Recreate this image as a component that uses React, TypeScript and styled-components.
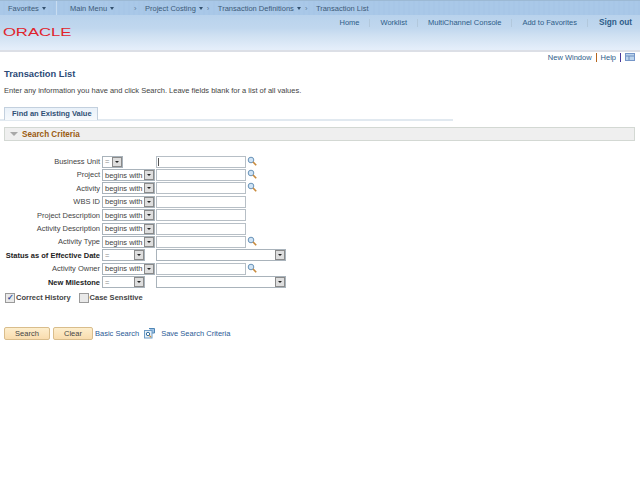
import React from "react";
import styled, { createGlobalStyle } from "styled-components";

const Global = createGlobalStyle`
  html, body { margin: 0; padding: 0; background: #fff; }
  body { font-family: "Liberation Sans", Arial, sans-serif; font-size: 7.5px; color: #444; width: 640px; height: 480px; overflow: hidden; }
`;
const Header = styled.header`height: 52px; background: linear-gradient(#b8d2ec 14px, #c0d7ee 28px, #d0e1f2 36px, #e4eefa 49px); border-bottom: 2px solid #dcdfe6; box-sizing: border-box;`;
const MenuBar = styled.nav`height: 15px; box-sizing: border-box; display: flex; align-items: center; background: repeating-linear-gradient(90deg, #a9c8e8 0 3px, #a7c6e7 3px 5px); border-top: 1px solid #9cb9d4; color: #3c5a78; white-space: nowrap;`;
const MenuItem = styled.span<{ $w: number; $pad: number; $divider?: boolean }>`width: ${p => p.$w}px; box-sizing: border-box; display: flex; align-items: center; height: 14px; padding-left: ${p => p.$pad}px; border-right: ${p => p.$divider ? "1px solid #c8dcf0" : "none"};`;
const Caret = styled.i`display: inline-block; width: 0; height: 0; margin-left: 3px; border-left: 2.5px solid transparent; border-right: 2.5px solid transparent; border-top: 3px solid #33516f;`;
const Chevron = styled.span`width: 15px; box-sizing: border-box; padding-left: 4px; color: #5d7b98;`;
const HeaderRow = styled.div`display: flex; justify-content: space-between; align-items: flex-start;`;
const Logo = styled.div`color: #e0242c; font-size: 11.5px; line-height: 12px; transform: scaleX(1.45); transform-origin: left; padding: 11px 0 0 2px;`;
const TopLinks = styled.div`display: flex; align-items: center; height: 14px; margin-top: 1px; padding-right: 8px;`;
const TopLink = styled.a<{ $strong?: boolean; $last?: boolean }>`color: #2d5c88; font-size: ${p => p.$strong ? "8.25px" : "7.5px"}; font-weight: ${p => p.$strong ? 700 : 400}; padding: 0 ${p => p.$last ? 0 : 10}px 0 ${p => p.$last ? 11 : 10}px; border-right: ${p => p.$last ? "none" : "1px solid #b2c8dc"}; line-height: 8px;`;
const Utility = styled.div`height: 10px; display: flex; justify-content: flex-end; align-items: center; padding-right: 5px; color: #2d5c88;`;
const Sep = styled.span<{ $c: string }>`width: 1px; height: 9px; margin: 0 4px; background: ${p => p.$c};`;
const Main = styled.main`display: block;`;
const Title = styled.h1`margin: 6px 0 0 4px; font-size: 9.3px; line-height: 12px; font-weight: 700; color: #2b4a78;`;
const Intro = styled.p`margin: 6px 0 0 4px; line-height: 10px; color: #444;`;
const TabRow = styled.div`margin-top: 11px; margin-right: 187px; padding-left: 4px; border-bottom: 2px solid #e1e9f0; height: 12px;`;
const Tab = styled.div`height: 13px; box-sizing: border-box; width: 94px; padding-left: 7px; border: 1px solid #c3d0de; border-bottom: none; background: linear-gradient(#e9f1f9, #f6f9fc); color: #2f4f74; font-weight: 700; line-height: 12px; white-space: nowrap;`;
const Criteria = styled.div`margin: 6px 5px 0 4px; height: 14px; box-sizing: border-box; background: #efefef; border: 1px solid #d3d8d3; display: flex; align-items: center; gap: 4px; padding-left: 5px; color: #9a5a10; font-size: 8.15px; font-weight: 700;`;
const Tri = styled.i`width: 0; height: 0; border-left: 4px solid transparent; border-right: 4px solid transparent; border-top: 4px solid #a8a8a8;`;
const Form = styled.div`margin-top: 14px; display: grid; grid-template-columns: 101px 55px auto; align-items: center;`;
const Label = styled.label<{ $strong?: boolean }>`text-align: right; padding-right: 1px; height: 13.4px; line-height: 13px; white-space: nowrap; color: ${p => p.$strong ? "#222" : "#444"}; font-weight: ${p => p.$strong ? 700 : 400};`;
const Select = styled.div<{ $w: number; $muted?: boolean }>`width: ${p => p.$w}px; height: 12px; box-sizing: border-box; border: 1px solid #a9b3bb; background: #fff; display: flex; justify-content: space-between; align-items: center; padding-left: 2px; white-space: nowrap; color: ${p => p.$muted ? "#888" : "#444"};`;
const Arrow = styled.span`width: 10px; height: 10px; box-sizing: border-box; flex: none; background: #dedede; border: 1px solid #8a8a8a; display: flex; align-items: center; justify-content: center; &::after { content: ""; border-left: 2px solid transparent; border-right: 2px solid transparent; border-top: 2px solid #222; }`;
const FieldCell = styled.div`display: flex; align-items: center; gap: 0; height: 13.4px;`;
const OpCell = styled.div`padding-left: 1px;`;
const Input = styled.div<{ $caret?: boolean }>`width: 90px; height: 12px; box-sizing: border-box; border: 1px solid #b7bfc6; background: #fff; &::before { content: ""; display: ${p => p.$caret ? "block" : "none"}; width: 1px; height: 8px; margin: 1px 0 0 1px; background: #555; }`;
const MagIcon = styled.svg`margin: -2px 0 0 1px;`;
const Checks = styled.div`margin: 3px 0 0 5px; display: flex; align-items: center; font-weight: 700; color: #444; height: 12px;`;
const Box = styled.span`width: 8px; height: 8px; margin-right: 1px; border: 1px solid #9a9a9a; background: #e9e9e9; color: #2a4a9a; font-size: 8px; line-height: 8px; text-align: center; overflow: hidden;`;
const CheckItem = styled.span`display: flex; align-items: center; margin-right: 8px;`;
const Actions = styled.div`margin: 23px 0 0 4px; display: flex; align-items: center; color: #2a5a96;`;
const Button = styled.button<{ $w: number }>`width: ${p => p.$w}px; height: 13px; padding: 0; margin-right: 3px; border: 1px solid #d9bd8c; border-radius: 2px; background: linear-gradient(#fdeecd, #f9dcae); color: #444; font: 7.5px "Liberation Sans", sans-serif;`;
const BasicLink = styled.a`margin: 0 5px 0 -1px;`;
const SaveLink = styled.a`margin-left: 5px;`;

const Mag = () => (
  <MagIcon width="10" height="10" viewBox="0 0 10 10">
    <circle cx="4" cy="4" r="2.8" fill="#cfe3f5" stroke="#6a93b8" />
    <path d="M6 6 L9.2 9.2" stroke="#c88a3c" strokeWidth="1.6" />
  </MagIcon>
);
const SaveIcon = () => (
  <svg width="12" height="12" viewBox="0 0 12 12">
    <path d="M5 1.5 H10.5 V6 H8" fill="#9fc3e6" stroke="#4f86b5" />
    <rect x="0.5" y="3.5" width="7.5" height="7.5" fill="#e8f1f9" stroke="#6d9cc6" />
    <circle cx="4" cy="7" r="1.7" fill="#fff" stroke="#35709f" />
    <path d="M5.2 8.3 L7 10.2" stroke="#c88a3c" strokeWidth="1.2" />
  </svg>
);
const rows = [
  { l: "Business Unit", op: "=", w: 21, m: true },
  { l: "Project", op: "begins with", w: 53, m: true },
  { l: "Activity", op: "begins with", w: 53, m: true },
  { l: "WBS ID", op: "begins with", w: 53 },
  { l: "Project Description", op: "begins with", w: 53 },
  { l: "Activity Description", op: "begins with", w: 53 },
  { l: "Activity Type", op: "begins with", w: 53, m: true },
  { l: "Status as of Effective Date", op: "=", w: 43, strong: true, wide: true },
  { l: "Activity Owner", op: "begins with", w: 53, m: true },
  { l: "New Milestone", op: "=", w: 43, strong: true, wide: true },
];

export default function App() {
  return (
    <>
      <Global />
      <Header>
        <MenuBar>
          <MenuItem $w={57} $pad={8} $divider>Favorites<Caret /></MenuItem>
          <MenuItem $w={73} $pad={13}>Main Menu<Caret /></MenuItem>
          <Chevron>›</Chevron>Project Costing<Caret /><Chevron>›</Chevron>Transaction Definitions<Caret /><Chevron>›</Chevron>Transaction List
        </MenuBar>
        <HeaderRow>
          <Logo>ORACLE</Logo>
          <TopLinks>
            <TopLink>Home</TopLink>
            <TopLink>Worklist</TopLink>
            <TopLink>MultiChannel Console</TopLink>
            <TopLink>Add to Favorites</TopLink>
            <TopLink $strong $last>Sign out</TopLink>
          </TopLinks>
        </HeaderRow>
      </Header>
      <Main>
        <Utility>New Window<Sep $c="#b5651d" />Help<Sep $c="#4a3a9a" />
          <svg width="10" height="8" viewBox="0 0 10 8"><rect x=".5" y=".5" width="9" height="7" fill="#bcd4ec" stroke="#7596c8" /><path d="M1 3H9M4 3V7" stroke="#6f90c0" /></svg>
        </Utility>
        <Title>Transaction List</Title>
        <Intro>Enter any information you have and click Search. Leave fields blank for a list of all values.</Intro>
        <TabRow><Tab>Find an Existing Value</Tab></TabRow>
        <Criteria><Tri />Search Criteria</Criteria>
        <Form>
          {rows.map((r, i) => (
            <React.Fragment key={r.l}>
              <Label $strong={r.strong}>{r.l}</Label>
              <OpCell><Select $w={r.w} $muted={r.op === "="}>{r.op}<Arrow /></Select></OpCell>
              <FieldCell>
                {r.wide ? <Select $w={130}><span /><Arrow /></Select> : <Input $caret={i === 0} />}
                {r.m && <Mag />}
              </FieldCell>
            </React.Fragment>
          ))}
        </Form>
        <Checks>
          <CheckItem><Box>✓</Box>Correct History</CheckItem>
          <CheckItem><Box />Case Sensitive</CheckItem>
        </Checks>
        <Actions>
          <Button $w={46}>Search</Button>
          <Button $w={40}>Clear</Button>
          <BasicLink>Basic Search</BasicLink>
          <SaveIcon />
          <SaveLink>Save Search Criteria</SaveLink>
        </Actions>
      </Main>
    </>
  );
}
